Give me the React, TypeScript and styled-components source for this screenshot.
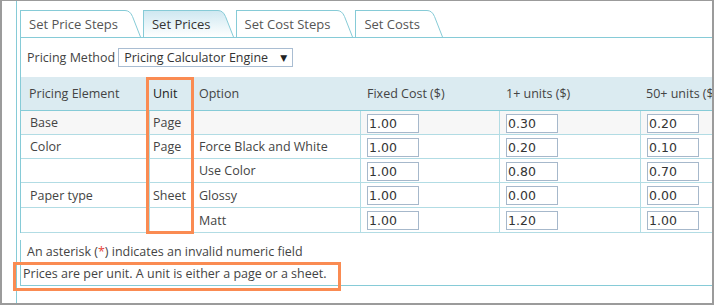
import React from "react";
import styled, { createGlobalStyle } from "styled-components";

const GlobalStyle = createGlobalStyle`
  html, body { margin: 0; padding: 0; background: #fff; }
  body { font-family: "Open Sans", "Noto Sans", sans-serif; color: #444; }
  * { box-sizing: border-box; }
`;

const CYAN = "#86cbd7";
const LINE = "#b2dce4";
const ORANGE = "#fa8b52";

const Frame = styled.div`
  position: relative;
  width: 714px;
  height: 305px;
  border-style: solid;
  border-color: #9b9b9b;
  border-width: 1px 2px 2px 2px;
  padding-left: 14px;
  overflow: hidden;
`;

const Main = styled.div`
  height: 100%;
  border-left: 1px solid ${CYAN};
  padding: 9px 0 0 3px;
  width: 760px;
`;

const TabStrip = styled.div`
  display: flex;
  gap: 2px;
  height: 28px;
  border-bottom: 1px solid ${CYAN};
`;

const TabItem = styled.div`
  display: flex;
  height: 27px;
`;

const TabBody = styled.div<{ $active?: boolean }>`
  display: flex;
  align-items: center;
  padding: 0 1px 1px 8px;
  border-left: 1px solid ${CYAN};
  border-top: 1px solid ${CYAN};
  font-size: 13px;
  color: ${(p) => (p.$active ? "#333" : "#555")};
  background: ${(p) =>
    p.$active ? "linear-gradient(#cfe8f1, #e9f5f9 55%, #ffffff)" : "#fff"};
  white-space: nowrap;
`;

const Ear = styled.svg`
  display: block;
  flex: none;
`;

const Panel = styled.div`
  border-left: 1px solid ${CYAN};
`;

const MethodRow = styled.div`
  display: flex;
  align-items: center;
  gap: 3px;
  height: 39px;
  padding-left: 6px;
  font-size: 12.5px;
`;

const SelectBox = styled.div`
  display: flex;
  align-items: center;
  justify-content: space-between;
  width: 175px;
  height: 19px;
  border: 1px solid #a9bdd2;
  padding: 0 5px 0 5px;
  font-size: 12.5px;
  color: #333;
`;

const Caret = styled.span`
  font-family: "DejaVu Sans", sans-serif;
  font-size: 9px;
  color: #222;
`;

const COLS = "129px 43px 168px 139px 141px 141px";

const HeaderRow = styled.div`
  display: grid;
  grid-template-columns: ${COLS};
  height: 34px;
  background: #dbebf1;
  border-bottom: 1px solid ${CYAN};
`;

const HeadCell = styled.div<{ $pad: number; $strong?: boolean }>`
  display: flex;
  align-items: center;
  padding-left: ${(p) => p.$pad}px;
  font-size: 12.5px;
  color: ${(p) => (p.$strong ? "#222" : "#444")};
  white-space: nowrap;
`;

const Row = styled.div<{ $shaded?: boolean; $h?: number }>`
  display: grid;
  grid-template-columns: ${COLS};
  height: ${(p) => p.$h ?? 24}px;
  border-bottom: 1px solid ${LINE};
  background: ${(p) => (p.$shaded ? "#f7f7f7" : "#fff")};
`;

const Cell = styled.div<{ $pad: number }>`
  display: flex;
  align-items: center;
  padding-left: ${(p) => p.$pad}px;
  border-right: 1px solid ${LINE};
  font-size: 12.5px;
  color: #444;
  white-space: nowrap;
`;

const PriceInput = styled.input`
  width: 52px;
  height: 19px;
  margin-top: 1px;
  border: 1px solid #a6b8cb;
  padding: 0 1px;
  font-family: "DejaVu Sans", Verdana, sans-serif;
  font-size: 12.5px;
  color: #333;
  background: #fff;
  outline: none;
`;

const Notes = styled.div`
  margin-top: 7px;
  border-left: 1px solid ${CYAN};
  border-bottom: 1px solid ${CYAN};
  padding-top: 1px;
  height: 46px;
`;

const NoteLine = styled.div<{ $pad: number }>`
  height: 22px;
  line-height: 22px;
  padding-left: ${(p) => p.$pad}px;
  font-size: 12.5px;
  color: #444;
  white-space: nowrap;
`;

const Star = styled.span`
  color: #e8453c;
`;

const Highlight = styled.div<{ $x: number; $y: number; $w: number; $h: number }>`
  position: absolute;
  left: ${(p) => p.$x}px;
  top: ${(p) => p.$y}px;
  width: ${(p) => p.$w}px;
  height: ${(p) => p.$h}px;
  border: 3px solid ${ORANGE};
  pointer-events: none;
`;

const tabs = [
  { label: "Set Price Steps", active: false },
  { label: "Set Prices", active: true },
  { label: "Set Cost Steps", active: false },
  { label: "Set Costs", active: false },
];

type RowData = {
  element: string;
  unit: string;
  option: string;
  prices: string[];
};

const rows: RowData[] = [
  { element: "Base", unit: "Page", option: "", prices: ["1.00", "0.30", "0.20"] },
  { element: "Color", unit: "Page", option: "Force Black and White", prices: ["1.00", "0.20", "0.10"] },
  { element: "", unit: "", option: "Use Color", prices: ["1.00", "0.80", "0.70"] },
  { element: "Paper type", unit: "Sheet", option: "Glossy", prices: ["1.00", "0.00", "0.00"] },
  { element: "", unit: "", option: "Matt", prices: ["1.00", "1.20", "1.00"] },
];

function Tab({ label, active }: { label: string; active: boolean }) {
  const gid = "tabgrad";
  return (
    <TabItem>
      <TabBody $active={active}>{label}</TabBody>
      <Ear width="22" height="27" viewBox="0 0 22 27">
        {active && (
          <defs>
            <linearGradient id={gid} x1="0" y1="0" x2="0" y2="1">
              <stop offset="0" stopColor="#cfe8f1" />
              <stop offset="0.55" stopColor="#e9f5f9" />
              <stop offset="1" stopColor="#ffffff" />
            </linearGradient>
          </defs>
        )}
        <path
          d="M0 0.5 H6 Q11 0.5 13.5 6.5 L21.5 27 H0 Z"
          fill={active ? `url(#${gid})` : "#fff"}
          stroke="none"
        />
        <path
          d="M0 0.5 H6 Q11 0.5 13.5 6.5 L21.5 27"
          fill="none"
          stroke={CYAN}
          strokeWidth="1"
        />
      </Ear>
    </TabItem>
  );
}

export default function App() {
  return (
    <>
      <GlobalStyle />
      <Frame>
        <Main>
          <TabStrip>
            {tabs.map((t) => (
              <Tab key={t.label} label={t.label} active={t.active} />
            ))}
          </TabStrip>
          <Panel>
            <MethodRow>
              <span>Pricing Method</span>
              <SelectBox>
                <span>Pricing Calculator Engine</span>
                <Caret>▼</Caret>
              </SelectBox>
            </MethodRow>
            <HeaderRow>
              <HeadCell $pad={8}>Pricing Element</HeadCell>
              <HeadCell $pad={3} $strong>Unit</HeadCell>
              <HeadCell $pad={6}>Option</HeadCell>
              <HeadCell $pad={6}>Fixed Cost ($)</HeadCell>
              <HeadCell $pad={6}>1+ units ($)</HeadCell>
              <HeadCell $pad={5}>50+ units ($)</HeadCell>
            </HeaderRow>
            {rows.map((r, i) => (
              <Row key={i} $shaded={i === 0} $h={i >= 3 ? 25 : 24}>
                <Cell $pad={9}>{r.element}</Cell>
                <Cell $pad={3}>{r.unit}</Cell>
                <Cell $pad={6}>{r.option}</Cell>
                {r.prices.map((p, j) => (
                  <Cell key={j} $pad={6}>
                    <PriceInput defaultValue={p} readOnly />
                  </Cell>
                ))}
              </Row>
            ))}
          </Panel>
          <Notes>
            <NoteLine $pad={6}>
              An asterisk (<Star>*</Star>) indicates an invalid numeric field
            </NoteLine>
            <NoteLine $pad={2}>
              Prices are per unit. A unit is either a page or a sheet.
            </NoteLine>
          </Notes>
        </Main>
        <Highlight $x={144} $y={76} $w={48} $h={157} />
        <Highlight $x={11} $y={261} $w={328} $h={29} />
      </Frame>
    </>
  );
}
